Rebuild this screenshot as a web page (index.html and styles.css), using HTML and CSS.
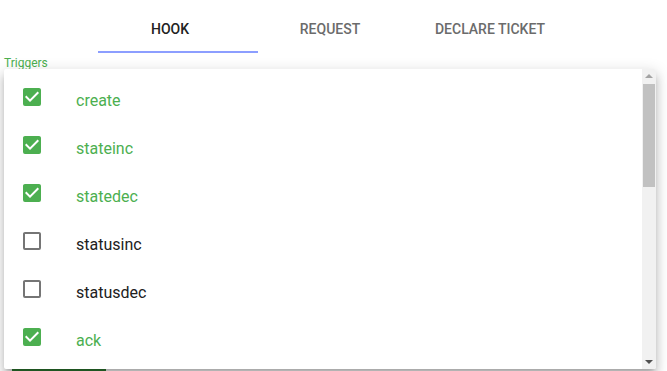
FILE: index.html
```html
<!DOCTYPE html>
<html>
<head>
<meta charset="utf-8">
<link rel="stylesheet" href="styles.css">
</head>
<body>
<div class="page">
  <div class="tabbar">
    <div class="tabs">
      <div class="tab active">HOOK</div>
      <div class="tab">REQUEST</div>
      <div class="tab">DECLARE TICKET</div>
    </div>
    <div class="slider"></div>
  </div>
  <div class="form">
    <div class="label">Triggers</div>
    <div class="actions"><button class="btn" aria-label="Submit"></button></div>
  </div>

  <div class="menu">
    <ul class="list">
      <li class="item checked"><span class="cb"><svg viewBox="0 0 24 24"><path d="M10,17L5,12L6.41,10.58L10,14.17L17.59,6.58L19,8M19,3H5C3.89,3 3,3.89 3,5V19A2,2 0 0,0 5,21H19A2,2 0 0,0 21,19V5C21,3.89 20.1,3 19,3Z"/></svg></span><span class="txt">create</span></li>
      <li class="item checked"><span class="cb"><svg viewBox="0 0 24 24"><path d="M10,17L5,12L6.41,10.58L10,14.17L17.59,6.58L19,8M19,3H5C3.89,3 3,3.89 3,5V19A2,2 0 0,0 5,21H19A2,2 0 0,0 21,19V5C21,3.89 20.1,3 19,3Z"/></svg></span><span class="txt">stateinc</span></li>
      <li class="item checked"><span class="cb"><svg viewBox="0 0 24 24"><path d="M10,17L5,12L6.41,10.58L10,14.17L17.59,6.58L19,8M19,3H5C3.89,3 3,3.89 3,5V19A2,2 0 0,0 5,21H19A2,2 0 0,0 21,19V5C21,3.89 20.1,3 19,3Z"/></svg></span><span class="txt">statedec</span></li>
      <li class="item"><span class="cb"><svg viewBox="0 0 24 24"><path d="M19,3H5C3.89,3 3,3.89 3,5V19A2,2 0 0,0 5,21H19A2,2 0 0,0 21,19V5C21,3.89 20.1,3 19,3M19,5V19H5V5H19Z"/></svg></span><span class="txt">statusinc</span></li>
      <li class="item"><span class="cb"><svg viewBox="0 0 24 24"><path d="M19,3H5C3.89,3 3,3.89 3,5V19A2,2 0 0,0 5,21H19A2,2 0 0,0 21,19V5C21,3.89 20.1,3 19,3M19,5V19H5V5H19Z"/></svg></span><span class="txt">statusdec</span></li>
      <li class="item checked"><span class="cb"><svg viewBox="0 0 24 24"><path d="M10,17L5,12L6.41,10.58L10,14.17L17.59,6.58L19,8M19,3H5C3.89,3 3,3.89 3,5V19A2,2 0 0,0 5,21H19A2,2 0 0,0 21,19V5C21,3.89 20.1,3 19,3Z"/></svg></span><span class="txt">ack</span></li>
    </ul>
    <div class="scrollbar">
      <div class="arrow up"></div>
      <div class="track"><div class="thumb"></div></div>
      <div class="arrow down"></div>
    </div>
  </div>
</div>
</body>
</html>
```
FILE: styles.css
```css
* { box-sizing: border-box; }
html, body {
  margin: 0;
  padding: 0;
  background: #fff;
  overflow: hidden;
}
body {
  font-family: Roboto, "Noto Sans", sans-serif;
  width: 667px;
  height: 371px;
}
.page {
  position: relative;
  width: 667px;
  height: 371px;
  overflow: hidden;
}
.tabbar {
  padding-top: 5px;
}
.tabs {
  display: flex;
  padding-left: 90px;
  height: 46px;
}
.tab {
  width: 160px;
  display: flex;
  justify-content: center;
  padding-top: 13px;
  font-size: 14px;
  font-weight: 500;
  line-height: 22px;
  color: #6b6b6b;
  height: 46px;
}
.tab.active { color: #212121; }
.slider {
  margin-left: 98px;
  width: 160px;
  height: 2px;
  background: #8c9eff;
}
.form {
  padding-left: 4px;
}
.label {
  margin-top: 3px;
  font-size: 12px;
  line-height: 14px;
  color: #4caf50;
}
.actions {
  margin-top: 296px;
  padding-left: 8px;
}
.btn {
  display: block;
  width: 94px;
  height: 36px;
  border: 0;
  border-radius: 2px;
  background: #2e7d32;
}
.menu {
  position: absolute;
  left: 4px;
  top: 69px;
  width: 652px;
  height: 300px;
  background: #fff;
  display: flex;
  overflow: hidden;
  box-shadow: 0 5px 5px -3px rgba(0,0,0,.2), 0 8px 10px 1px rgba(0,0,0,.14), 0 3px 14px 2px rgba(0,0,0,.12);
  border-radius: 2px;
}
.list {
  flex: 1;
  list-style: none;
  margin: 0;
  padding: 8px 0 0;
  overflow: hidden;
}
.item {
  display: flex;
  align-items: flex-start;
  height: 48px;
  padding-left: 16px;
}
.cb {
  width: 56px;
  flex: none;
  padding-top: 8px;
}
.cb svg {
  display: block;
  width: 24px;
  height: 24px;
  fill: #757575;
}
.item.checked .cb svg { fill: #4caf50; }
.txt {
  font-size: 16px;
  line-height: 48px;
  color: #212121;
}
.item.checked .txt { color: #4caf50; }

.scrollbar {
  width: 14px;
  flex: none;
  background: #f1f1f1;
  display: flex;
  flex-direction: column;
}
.arrow {
  height: 14px;
  flex: none;
  display: flex;
  align-items: center;
  justify-content: center;
}
.arrow::before {
  content: "";
  width: 0;
  height: 0;
  border-left: 4px solid transparent;
  border-right: 4px solid transparent;
}
.arrow.up::before {
  border-bottom: 4px solid #a3a3a3;
}
.arrow.down::before {
  border-top: 4px solid #505050;
}
.track {
  flex: 1;
  padding: 1px 1px 0;
}
.thumb {
  height: 103px;
  background: #c1c1c1;
}
```
